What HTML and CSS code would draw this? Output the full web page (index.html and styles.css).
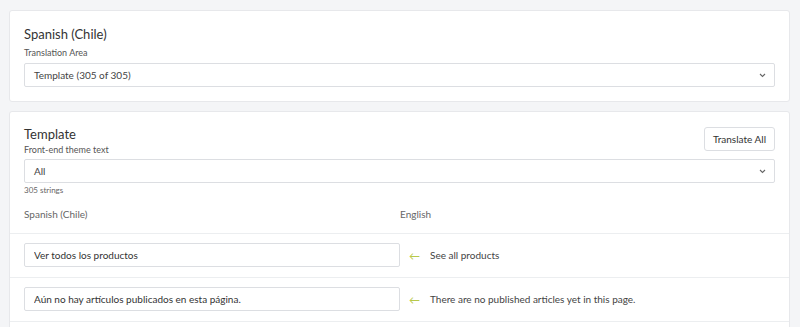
FILE: index.html
```html
<!DOCTYPE html>
<html lang="es">
  <head>
    <meta charset="UTF-8" />
    <meta name="viewport" content="width=device-width, initial-scale=1.0" />
    <title>Traducciones</title>
    <link rel="stylesheet" href="styles.css">
  </head>
  <body>
    <div class="card area-card">
      <h2 class="card-title">Spanish (Chile)</h2>
      <div class="field-label">Translation Area</div>
      <div class="select">
        <span>Template (305 of 305)</span>
        <svg class="chevron" width="7" height="5" viewBox="0 0 7 5"><path d="M1 1l2.5 2.5L6 1" fill="none" stroke="#666" stroke-width="1.1"/></svg>
      </div>
    </div>

    <div class="card strings-card">
      <div class="strings-head">
        <div class="head-top">
          <div>
            <h2 class="card-title">Template</h2>
            <div class="field-label">Front-end theme text</div>
          </div>
          <button class="btn">Translate All</button>
        </div>
        <div class="select">
          <span>All</span>
          <svg class="chevron" width="7" height="5" viewBox="0 0 7 5"><path d="M1 1l2.5 2.5L6 1" fill="none" stroke="#666" stroke-width="1.1"/></svg>
        </div>
        <div class="count">305 strings</div>
        <div class="cols">
          <div class="col-left">Spanish (Chile)</div>
          <div class="col-right">English</div>
        </div>
      </div>

      <div class="row">
        <input class="text-input" type="text" value="Ver todos los productos" />
        <span class="arrow">&larr;</span>
        <span class="source">See all products</span>
      </div>
      <div class="row">
        <input class="text-input" type="text" value="Aún no hay artículos publicados en esta página." />
        <span class="arrow">&larr;</span>
        <span class="source">There are no published articles yet in this page.</span>
      </div>
      <!-- siguiente fila, fuera de la vista -->
      <div class="row">
        <input class="text-input" type="text" value="" />
      </div>
    </div>
  </body>
</html>
```

FILE: styles.css
```css
body {
  font-family: "Lato", "Open Sans", sans-serif;
  color: #3a3a3a;
  background-color: #f4f5f7;
  margin: 0;
  padding: 10px 10px 0 9px;
}

.card {
  background-color: #fff;
  border: 1px solid #e7e8eb;
  border-radius: 3px;
}

.area-card {
  padding: 15px 14px 14px 14px;
  margin-bottom: 9px;
}

.card-title {
  font-size: 13px;
  font-weight: 400;
  line-height: 16px;
  margin: 0;
  color: #333;
}

.field-label {
  font-size: 9px;
  line-height: 12px;
  color: #555;
  margin-top: 5px;
  margin-bottom: 4px;
}

.select {
  height: 24px;
  box-sizing: border-box;
  border: 1px solid #dcdee2;
  border-radius: 2px;
  padding: 0 8px 0 9px;
  display: flex;
  align-items: center;
  justify-content: space-between;
  font-size: 10px;
  color: #444;
}

.strings-head {
  padding: 14px 14px 0 14px;
}

.head-top {
  display: flex;
  justify-content: space-between;
  align-items: flex-start;
}

.head-top .field-label {
  margin-top: 2px;
  margin-bottom: 3px;
}

.btn {
  font-family: inherit;
  font-size: 10px;
  color: #333;
  background-color: #fff;
  border: 1px solid #dcdee2;
  border-radius: 3px;
  height: 24px;
  padding: 0 8px;
  margin-top: 1px;
}

.count {
  font-size: 8px;
  color: #666;
  margin-top: 1px;
  line-height: 12px;
}

.cols {
  display: flex;
  font-size: 10px;
  color: #666;
  padding: 11px 0 12px 0;
  line-height: 14px;
}

.col-left {
  width: 376px;
}

.row {
  border-top: 1px solid #eceef0;
  padding: 9px 14px 10px 14px;
  display: flex;
  align-items: center;
}

.text-input {
  width: 376px;
  height: 24px;
  box-sizing: border-box;
  border: 1px solid #dcdee2;
  border-radius: 2px;
  padding: 0 9px;
  font-family: inherit;
  font-size: 10px;
  color: #333;
  margin: 0;
}

.arrow {
  color: #b8c94a;
  font-size: 11px;
  margin-left: 9px;
  width: 21px;
}

.source {
  font-size: 10px;
  color: #444;
}
```
